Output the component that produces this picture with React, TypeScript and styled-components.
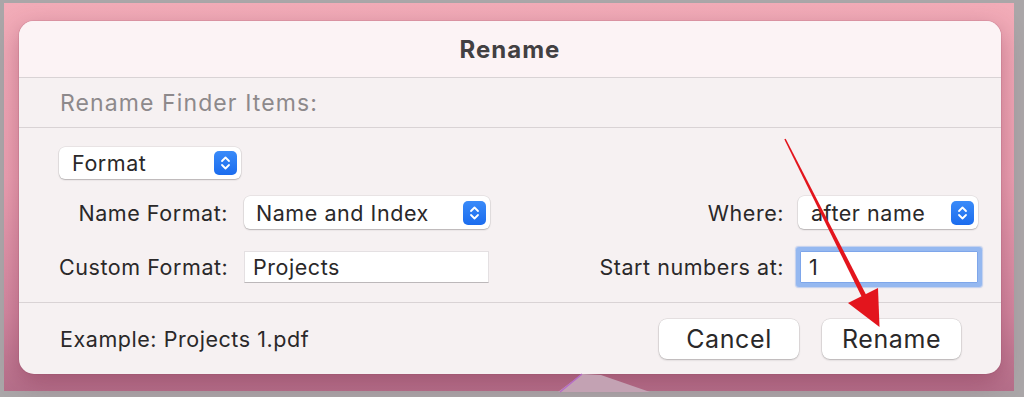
import styled, { createGlobalStyle } from 'styled-components'

const GlobalStyle = createGlobalStyle`
    html, body {
        margin: 0;
        padding: 0;
    }
    body {
        font-family: Inter, 'Noto Sans', 'Liberation Sans', sans-serif;
        -webkit-font-smoothing: antialiased;
    }
`

const Frame = styled.div`
    position: relative;
    width: 1024px;
    height: 397px;
    box-sizing: border-box;
    padding: 3px 10px 6px 4px;
    background: #aaa6a8;
    overflow: hidden;
`
const Desktop = styled.div`
    position: relative;
    height: 100%;
    box-sizing: border-box;
    padding: 18px 0 0 15px;
    background: linear-gradient(
        180deg,
        #f2acb8 0%,
        #eba0b1 45%,
        #d2879f 80%,
        #b56f8a 100%
    );
`
const Dialog = styled.div`
    width: 982px;
    height: 353px;
    border-radius: 15px;
    overflow: hidden;
    display: flex;
    flex-direction: column;
    background: #f6f1f2;
    box-shadow: 0 8px 24px rgba(110, 30, 60, 0.35), 0 0 0 1px rgba(150, 80, 100, 0.15);
    color: #2a2829;
`
const TitleBar = styled.div`
    height: 57px;
    box-sizing: border-box;
    border-bottom: 1px solid #d9d3d5;
    background: #fcf3f5;
    display: flex;
    align-items: center;
    justify-content: center;
    font-size: 24px;
    font-weight: 700;
    color: #424042;
    letter-spacing: 1px;
`
const SubHeader = styled.div`
    height: 50px;
    box-sizing: border-box;
    border-bottom: 1px solid #d9d3d5;
    padding-left: 41px;
    display: flex;
    align-items: center;
    font-size: 23px;
    color: #8d898b;
    letter-spacing: 1.1px;
`
const Body = styled.div`
    box-sizing: border-box;
    padding: 19px 23px 19px 40px;
    border-bottom: 1px solid #d9d3d5;
    display: flex;
    flex-direction: column;
    gap: 17px;
`
const Rows = styled.div`
    display: flex;
    flex-direction: column;
    gap: 22px;
`
const Row = styled.div`
    display: flex;
    align-items: center;
    justify-content: space-between;
`
const Group = styled.div`
    display: flex;
    align-items: center;
    gap: ${p => p.$gap}px;
`
const Label = styled.div`
    width: ${p => (p.$width ? `${p.$width}px` : 'auto')};
    text-align: right;
    font-size: 21.5px;
    letter-spacing: 0.55px;
    white-space: nowrap;
`
const Popup = styled.div`
    width: ${p => p.$width}px;
    height: ${p => p.$height}px;
    box-sizing: border-box;
    padding: 0 4px 0 ${p => p.$pad}px;
    border-radius: 6px;
    background: #ffffff;
    box-shadow: 0 1px 1.5px rgba(0, 0, 0, 0.22), 0 0 0 0.5px rgba(0, 0, 0, 0.1);
    display: flex;
    align-items: center;
    justify-content: space-between;
    font-size: 21.5px;
    letter-spacing: 0.55px;
`
const Field = styled.div`
    width: ${p => p.$width}px;
    height: ${p => p.$height}px;
    box-sizing: border-box;
    padding-left: 8px;
    background: #ffffff;
    border: 1px solid #e4e0e2;
    border-bottom-color: #bcb8ba;
    display: flex;
    align-items: center;
    font-size: 21.5px;
    letter-spacing: 0.55px;
`
const FocusField = styled(Field)`
    border: 1px solid #7ea6ea;
    border-radius: 1px;
    box-shadow: 0 0 0 4px #95b8f0, 0 0 1px 5px rgba(140, 175, 235, 0.5);
`
const Footer = styled.div`
    flex: 1;
    display: flex;
    align-items: center;
    justify-content: space-between;
    padding: 0 40px 0 41px;
`
const Example = styled.div`
    font-size: 21.5px;
    letter-spacing: 0.55px;
`
const Buttons = styled.div`
    display: flex;
    gap: 23px;
`
const Button = styled.button`
    width: ${p => p.$width}px;
    height: 40px;
    border: none;
    border-radius: 8px;
    background: #ffffff;
    box-shadow: 0 1px 2px rgba(0, 0, 0, 0.22), 0 0 0 0.5px rgba(0, 0, 0, 0.12);
    font-family: inherit;
    font-size: 25px;
    letter-spacing: 0.6px;
    color: #2a2829;
    padding: 0;
`
const Overlay = styled.svg`
    position: absolute;
    left: 0;
    top: 0;
    pointer-events: none;
`

function Stepper () {
    return (
        <svg width='23' height='24' viewBox='0 0 23 24'>
            <defs>
                <linearGradient id='stepBlue' x1='0' y1='0' x2='0' y2='1'>
                    <stop offset='0' stopColor='#3a8bf9' />
                    <stop offset='1' stopColor='#1b6cee' />
                </linearGradient>
            </defs>
            <rect width='23' height='24' rx='5' fill='url(#stepBlue)' />
            <path
                d='M8 10 L11.5 6.5 L15 10 M8 14 L11.5 17.5 L15 14'
                fill='none'
                stroke='#ffffff'
                strokeWidth='1.8'
                strokeLinecap='round'
                strokeLinejoin='round'
            />
        </svg>
    )
}

function App () {
    return (
        <>
            <GlobalStyle />
            <Frame>
                <Desktop>
                    <Dialog>
                        <TitleBar>Rename</TitleBar>
                        <SubHeader>Rename Finder Items:</SubHeader>
                        <Body>
                            <Popup $width={182} $height={32} $pad={13}>
                                Format
                                <Stepper />
                            </Popup>
                            <Rows>
                                <Row>
                                    <Group $gap={16}>
                                        <Label $width={169}>Name Format:</Label>
                                        <Popup $width={246} $height={33} $pad={12}>
                                            Name and Index
                                            <Stepper />
                                        </Popup>
                                    </Group>
                                    <Group $gap={14}>
                                        <Label>Where:</Label>
                                        <Popup $width={180} $height={33} $pad={13}>
                                            after name
                                            <Stepper />
                                        </Popup>
                                    </Group>
                                </Row>
                                <Row>
                                    <Group $gap={17}>
                                        <Label $width={168}>Custom Format:</Label>
                                        <Field $width={245} $height={32}>Projects</Field>
                                    </Group>
                                    <Group $gap={16}>
                                        <Label>Start numbers at:</Label>
                                        <FocusField $width={178} $height={32}>1</FocusField>
                                    </Group>
                                </Row>
                            </Rows>
                        </Body>
                        <Footer>
                            <Example>Example: Projects 1.pdf</Example>
                            <Buttons>
                                <Button $width={140}>Cancel</Button>
                                <Button $width={139}>Rename</Button>
                            </Buttons>
                        </Footer>
                    </Dialog>
                </Desktop>
                <Overlay width='1024' height='397' viewBox='0 0 1024 397'>
                    <polygon points='558,392 582,374 601,375 650,392' fill='#c3a2b3' />
                    <line x1='560' y1='392' x2='582' y2='374' stroke='#b56cc6' strokeWidth='1.5' />
                    <polygon
                        points='785.7,138.7 866.2,294.9 861.8,297.1 784.3,139.3'
                        fill='#e3151d'
                    />
                    <polygon points='848,303 878,288 879.5,327' fill='#e3151d' />
                </Overlay>
            </Frame>
        </>
    )
}

export default App
